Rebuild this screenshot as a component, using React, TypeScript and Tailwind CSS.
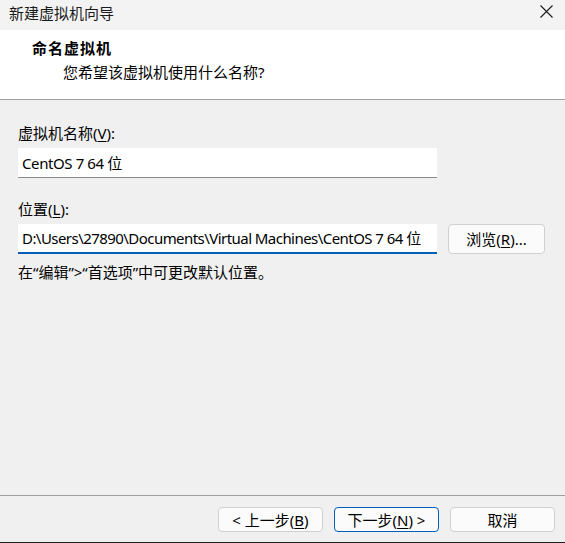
import React from "react";

const font = { fontFamily: '"Noto Sans", "Noto Sans CJK SC", sans-serif' };

function U({ c }: { c: string }) {
  return <span className="underline underline-offset-2">{c}</span>;
}

export default function App() {
  return (
    <div
      className="w-[565px] h-[543px] flex flex-col bg-[#f0f0f0] text-black text-[15px] leading-[20px] overflow-hidden"
      style={font}
    >
      {/* Title bar */}
      <div className="h-[30px] flex items-center justify-between pl-[9px] pr-[12px] bg-[#f3f3f3] shrink-0">
        <span className="text-[15px] text-[#1a1a1a] -mt-[5px]">新建虚拟机向导</span>
        <svg width="13" height="13" viewBox="0 0 13 13" className="-mt-[8px]">
          <path d="M0.5 0.5 L12.5 12.5 M12.5 0.5 L0.5 12.5" stroke="#1a1a1a" strokeWidth="1.1" fill="none" />
        </svg>
      </div>

      {/* Header */}
      <div className="h-[70px] bg-white border-b border-[#a0a0a0] pt-[8px] shrink-0">
        <div className="pl-[32px] font-bold tracking-[1px]">命名虚拟机</div>
        <div className="pl-[63px] mt-[4px]">您希望该虚拟机使用什么名称?</div>
      </div>

      {/* Body */}
      <div className="flex-1 flex flex-col px-[18px] pt-[23px]">
        <div>
          虚拟机名称(<U c="V" />):
        </div>
        <div className="mt-[5px] w-[419px] h-[30px] bg-white border-b border-[#8a8a8a] flex items-center pl-[4px] tracking-[-0.4px]">
          CentOS 7 64 位
        </div>

        <div className="mt-[21px]">
          位置(<U c="L" />):
        </div>
        <div className="mt-[5px] flex items-start gap-[11px]">
          <div className="w-[419px] h-[30px] bg-white border-b-2 border-[#005fb8] flex items-center pl-[4px] whitespace-nowrap overflow-hidden tracking-[-0.55px]">
            D:\Users\27890\Documents\Virtual Machines\CentOS 7 64 位
          </div>
          <button className="w-[97px] h-[30px] bg-[#fbfbfb] border border-[#d0d0d0] rounded-[4px] flex items-center justify-center">
            浏览(<U c="R" />)...
          </button>
        </div>
        <div className="mt-[8px]">在“编辑”&gt;“首选项”中可更改默认位置。</div>
      </div>

      {/* Footer */}
      <div className="h-[48px] border-t border-[#a0a0a0] shrink-0 flex justify-end items-start gap-[11px] pr-[10px] pt-[11px] border-b border-b-[#1f1f1f]">
        <button className="w-[105px] h-[25px] bg-[#fbfbfb] border border-[#d0d0d0] rounded-[4px] flex items-center justify-center">
          &lt; 上一步(<U c="B" />)
        </button>
        <button className="w-[105px] h-[25px] bg-[#fbfbfb] border border-[#005fb8] rounded-[4px] flex items-center justify-center">
          下一步(<U c="N" />) &gt;
        </button>
        <button className="w-[105px] h-[25px] bg-[#fbfbfb] border border-[#d0d0d0] rounded-[4px] flex items-center justify-center">
          取消
        </button>
      </div>
    </div>
  );
}
